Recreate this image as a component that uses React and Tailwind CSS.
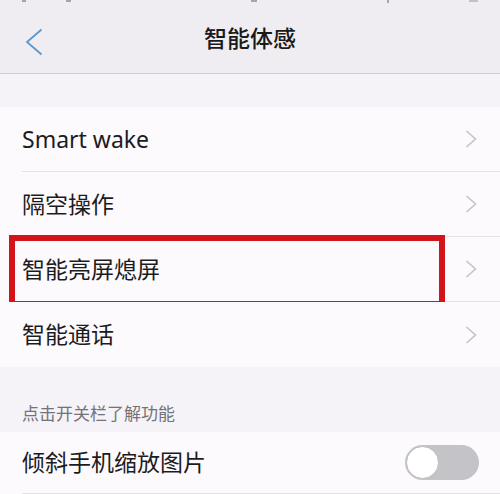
const rows = ["Smart wake", "隔空操作", "智能亮屏熄屏", "智能通话"];

const font = { fontFamily: '"Noto Sans", "Noto Sans CJK SC", sans-serif' };

function Chevron() {
  return (
    <svg width="12" height="18" viewBox="0 0 12 18" fill="none" className="text-[#c4c3c8]">
      <path d="M1.5 1 L10.5 9 L1.5 17" stroke="currentColor" strokeWidth="1.6" />
    </svg>
  );
}

function Row({ label, marked, last }) {
  return (
    <div className="relative bg-[#fcfafd] pl-[22px]">
      <div
        className={`flex h-[65px] items-center justify-between pr-[23px] ${
          last ? "" : "border-b border-[#e4e2e7]"
        }`}
      >
        <span className="text-[23px] text-[#1c1c1e]">{label}</span>
        <Chevron />
      </div>
      {marked && (
        <div className="pointer-events-none absolute left-[9px] top-[-2px] h-[72px] w-[436px] border-[6px] border-[#d3141b]" />
      )}
    </div>
  );
}

export default function App() {
  return (
    <div className="h-[494px] w-[500px] overflow-hidden bg-[#f5f3f7]" style={font}>
      <header className="h-[74px] border-b border-[#cfcdd2] bg-[#efedf2]">
        <div className="flex h-[4px] items-start gap-[40px] px-[22px]">
          <span className="h-[2px] w-[14px] bg-[#a5a4a9]" />
          <span className="h-[2px] w-[14px] bg-[#a5a4a9]" />
          <span className="ml-[140px] h-[2px] w-[20px] bg-[#a5a4a9]" />
          <span className="ml-[90px] h-[3px] w-[6px] bg-[#a5a4a9]" />
          <span className="ml-[40px] h-[2px] w-[30px] bg-[#c2c1c6]" />
        </div>
        <div className="relative flex h-[69px] items-center justify-center">
          <svg
            width="18"
            height="28"
            viewBox="0 0 18 28"
            fill="none"
            className="absolute left-[25px] top-[24px] text-[#5b97d0]"
          >
            <path d="M16.5 1.5 L2 14 L16.5 26.5" stroke="currentColor" strokeWidth="1.8" />
          </svg>
          <h1 className="text-[23px] font-medium text-[#1a1a1a]">智能体感</h1>
        </div>
      </header>

      <div className="h-[33px]" />

      <div>
        {rows.map((label, i) => (
          <Row key={label} label={label} marked={i === 2} last={i === rows.length - 1} />
        ))}
      </div>

      <div className="flex h-[65px] items-end px-[22px] pb-[6px]">
        <span className="text-[17px] text-[#737276]">点击开关栏了解功能</span>
      </div>

      <div className="bg-[#fcfafd] pl-[22px]">
        <div className="flex h-[62px] items-center justify-between border-b border-[#e4e2e7] pr-[21px]">
          <span className="text-[23px] text-[#1c1c1e]">倾斜手机缩放图片</span>
          <div className="flex h-[35px] w-[74px] items-center rounded-full bg-[#c4c3c8] p-[1px]">
            <div className="size-[33px] rounded-full border border-[#bdbcc1] bg-white" />
          </div>
        </div>
      </div>
    </div>
  );
}
